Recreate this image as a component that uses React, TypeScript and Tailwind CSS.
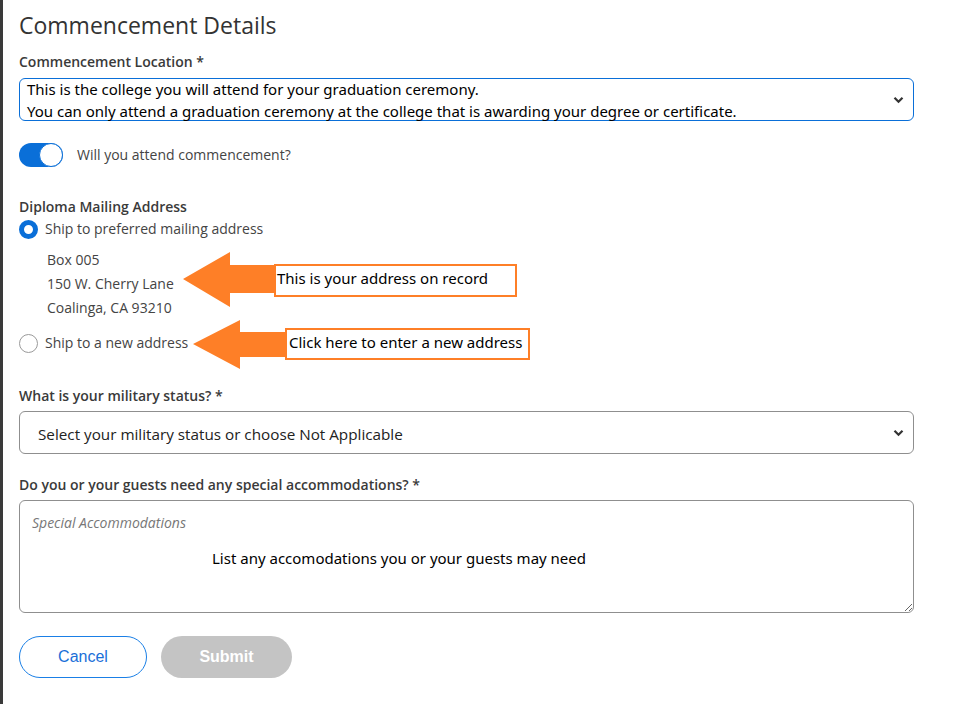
import React from "react";

const Chevron = () => (
  <svg width="11" height="8" viewBox="0 0 11 8" className="shrink-0">
    <path d="M1.5 1.8 L5.5 5.8 L9.5 1.8" fill="none" stroke="#333" strokeWidth="2.2" />
  </svg>
);

export default function App() {
  return (
    <div className="relative min-h-[704px] w-[958px] bg-white border-l-[3px] border-[#3a3a3a] pl-[16px] pt-[10px] font-['Open_Sans',sans-serif] text-[#333]">
      <div className="w-[895px] flex flex-col">
        <h1 className="text-[23px] leading-[30px] text-[#333]">Commencement Details</h1>

        <div className="mt-[12px] text-[14px] leading-[20px] font-semibold text-[#3a3a3a]">Commencement Location *</div>
        <div className="mt-[6px] h-[43px] rounded-[6px] border border-[#0a6fd8] flex items-center justify-between pl-[7px] pr-[9px]">
          <div className="font-['Noto_Sans',sans-serif] text-[15px] leading-[22px] text-black">
            <div>This is the college you will attend for your graduation ceremony.</div>
            <div>You can only attend a graduation ceremony at the college that is awarding your degree or certificate.</div>
          </div>
          <Chevron />
        </div>

        <div className="mt-[22px] flex items-center gap-[14px]">
          <div className="relative w-[44px] h-[24px] rounded-full bg-[#0a6fd8]">
            <div className="absolute right-0 top-0 w-[24px] h-[24px] rounded-full bg-white border border-[#0a6fd8]" />
          </div>
          <span className="text-[14px] leading-[20px] text-[#444]">Will you attend commencement?</span>
        </div>

        <div className="mt-[30px] text-[14px] leading-[20px] font-semibold text-[#3a3a3a]">Diploma Mailing Address</div>
        <div className="mt-[2px] flex items-center gap-[7px]">
          <div className="w-[19px] h-[19px] rounded-full border-[5px] border-[#0a6fd8] bg-white" />
          <span className="text-[14px] leading-[20px] text-[#444]">Ship to preferred mailing address</span>
        </div>
        <div className="mt-[9px] pl-[28px] text-[14px] leading-[24px] text-[#444]">
          <div>Box 005</div>
          <div>150 W. Cherry Lane</div>
          <div>Coalinga, CA 93210</div>
        </div>
        <div className="mt-[13px] flex items-center gap-[7px]">
          <div className="w-[19px] h-[19px] rounded-full border border-[#9a9a9a] bg-white" />
          <span className="text-[14px] leading-[20px] text-[#444]">Ship to a new address</span>
        </div>

        <div className="mt-[33px] text-[14px] leading-[20px] font-semibold text-[#3a3a3a]">What is your military status? *</div>
        <div className="mt-[5px] h-[43px] rounded-[6px] border border-[#8f8f8f] flex items-center justify-between pl-[18px] pr-[9px]">
          <span className="text-[15.25px] leading-[22px] text-[#222] pt-[3px]">Select your military status or choose Not Applicable</span>
          <Chevron />
        </div>

        <div className="mt-[21px] text-[14px] leading-[20px] font-semibold text-[#3a3a3a]">Do you or your guests need any special accommodations? *</div>
        <div className="relative mt-[5px]">
          <textarea
            className="block w-[895px] h-[113px] rounded-[6px] border border-[#8f8f8f] px-[12px] pt-[12px] text-[14px] leading-[20px] placeholder:italic placeholder:text-[#777] outline-none"
            placeholder="Special Accommodations"
          />
          <div className="absolute left-[193px] top-[47px] font-['Noto_Sans',sans-serif] text-[15px] leading-[22px] text-black pointer-events-none">
            List any accomodations you or your guests may need
          </div>
        </div>

        <div className="mt-[23px] flex gap-[14px]">
          <button className="w-[128px] h-[42px] rounded-full border border-[#1a7fe6] bg-white text-[16px] text-[#1a6fd8] font-['Liberation_Sans',sans-serif]">
            Cancel
          </button>
          <button className="w-[131px] h-[42px] rounded-full bg-[#c4c4c4] text-[16px] font-bold text-white font-['Liberation_Sans',sans-serif]">
            Submit
          </button>
        </div>
      </div>

      {/* Annotations */}
      <svg className="absolute top-0 pointer-events-none" width="958" height="704" viewBox="0 0 958 704" style={{ left: -3 }}>
        <polygon points="183,279 230,252 230,265 276,265 276,293 230,293 230,307" fill="#fe7f27" />
        <polygon points="193,344 240,320 240,332 287,332 287,357 240,357 240,369" fill="#fe7f27" />
      </svg>
      <div className="absolute left-[271px] top-[264px] w-[243px] h-[33px] border-2 border-[#fe7f27] bg-white pl-[1px] font-['Noto_Sans',sans-serif] text-[15px] leading-[24px] text-black">
        This is your address on record
      </div>
      <div className="absolute left-[282px] top-[328px] w-[245px] h-[32px] border-2 border-[#fe7f27] bg-white pl-[2px] font-['Noto_Sans',sans-serif] text-[15px] leading-[24px] text-black">
        Click here to enter a new address
      </div>
    </div>
  );
}
